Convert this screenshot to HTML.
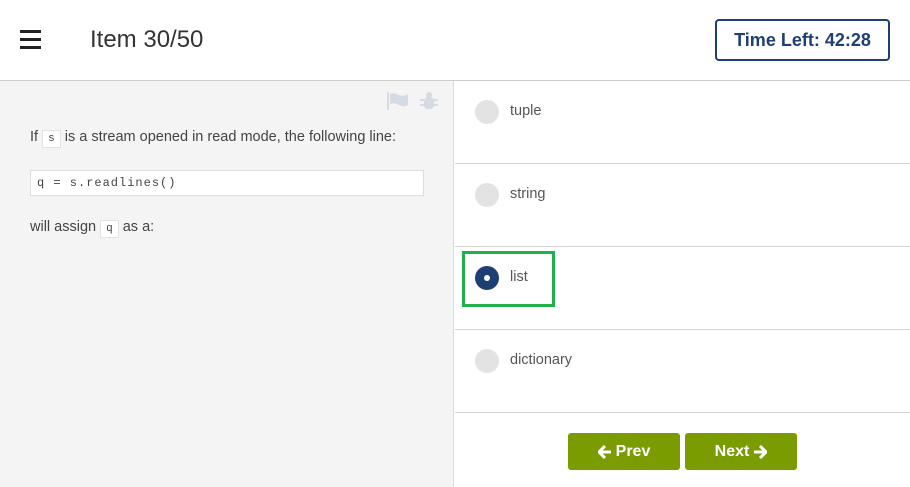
<!DOCTYPE html>
<html><head><style>
*{margin:0;padding:0;box-sizing:border-box}
body{width:910px;height:487px;overflow:hidden;font-family:"Liberation Sans",sans-serif;background:#fff;position:relative;color:#444}
.hdr{position:absolute;left:0;top:0;width:910px;height:81px;border-bottom:1px solid #ccc;background:#fff}
.burger{position:absolute;left:20px;top:30px;width:21px}
.burger i{display:block;height:3px;background:#222;margin-bottom:5px}
.title{position:absolute;left:90px;top:26px;font-size:24px;color:#333}
.time{position:absolute;left:715px;top:19px;width:175px;height:42px;border:2px solid #1e3f74;border-radius:4px;color:#1e3f74;font-weight:bold;font-size:18px;text-align:center;line-height:38px}
.left{position:absolute;left:0;top:81px;width:454px;height:406px;background:#f4f4f4;border-right:1px solid #ddd}
.p{position:absolute;left:30px;font-size:14.5px;color:#444}
code{font-family:"Liberation Mono",monospace;font-size:11px;background:#fff;border:1px solid #e2e2e2;padding:2px 5px}
.codebox{position:absolute;left:30px;top:89px;width:394px;height:26px;background:#fff;border:1px solid #ddd;font-family:"Liberation Mono",monospace;font-size:12px;letter-spacing:1px;line-height:24px;padding-left:6px;color:#444}
.line{position:absolute;left:455px;width:455px;height:1px;background:#d6d6d6}
.r{position:absolute;left:475px;width:24px;height:24px;border-radius:50%;background:#e3e3e3}
.lbl{position:absolute;left:510px;font-size:14.5px;color:#555}
.btn{position:absolute;top:433px;width:112px;height:37px;background:#7a9c00;border-radius:3px;color:#fff;font-weight:bold;font-size:16px;display:flex;align-items:center;justify-content:center;gap:4px}
</style></head><body>
<div class="hdr">
<div class="burger"><i></i><i></i><i></i></div>
<div class="title">Item 30/50</div>
<div class="time">Time Left: 42:28</div>
</div>
<div class="left">
<svg style="position:absolute;left:387px;top:11px" width="22" height="18" viewBox="0 0 22 18"><rect x="0" y="0" width="2" height="18" fill="#d5dbe3"/><path d="M3 2 Q8 0 12 3 Q17 5 21 2 V13 Q17 16 12 13 Q8 10 3 12Z" fill="#d5dbe3"/></svg>
<svg style="position:absolute;left:419px;top:10px" width="20" height="20" viewBox="0 0 20 20" fill="#d5dbe3"><circle cx="10" cy="4" r="3"/><rect x="5" y="6" width="10" height="12" rx="4"/><path d="M1 8h4v2H1zM15 8h4v2h-4zM1 13h4v2H1zM15 13h4v2h-4z"/></svg>
<div class="p" style="top:48px">If <code>s</code> is a stream opened in read mode, the following line:</div>
<div class="codebox">q = s.readlines()</div>
<div class="p" style="top:138px">will assign <code>q</code> as a:</div>
</div>
<div class="line" style="top:163px"></div>
<div class="line" style="top:246px"></div>
<div class="line" style="top:329px"></div>
<div class="line" style="top:412px"></div>
<div class="r" style="top:100px"></div><div class="lbl" style="top:103px">tuple</div>
<div class="r" style="top:183px"></div><div class="lbl" style="top:186px">string</div>
<div class="r" style="top:266px;background:#1e3f74"><div style="position:absolute;left:9px;top:9px;width:6px;height:6px;border-radius:50%;background:#fff"></div></div><div class="lbl" style="top:269px">list</div>
<div style="position:absolute;left:462px;top:251px;width:93px;height:56px;border:3px solid #22b04b"></div>
<div class="r" style="top:349px"></div><div class="lbl" style="top:352px">dictionary</div>
<div class="btn" style="left:568px"><svg width="14" height="14" viewBox="0 0 14 14"><path d="M7 1 L1 7 L7 13 M1 7 H13" stroke="#fff" stroke-width="3" fill="none" stroke-linejoin="round"/></svg>Prev</div>
<div class="btn" style="left:685px">Next<svg width="14" height="14" viewBox="0 0 14 14"><path d="M7 1 L13 7 L7 13 M13 7 H1" stroke="#fff" stroke-width="3" fill="none" stroke-linejoin="round"/></svg></div>
</body></html>
